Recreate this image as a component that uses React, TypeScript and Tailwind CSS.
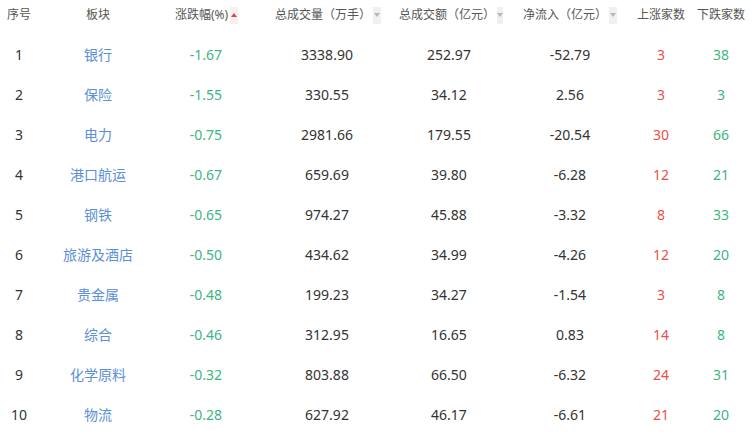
import React from "react";

interface Sector {
  id: number;
  name: string;
  change: string;
  volume: string;
  amount: string;
  netFlow: string;
  up: number;
  down: number;
}

const sectors: Sector[] = [
  { id: 1, name: "银行", change: "-1.67", volume: "3338.90", amount: "252.97", netFlow: "-52.79", up: 3, down: 38 },
  { id: 2, name: "保险", change: "-1.55", volume: "330.55", amount: "34.12", netFlow: "2.56", up: 3, down: 3 },
  { id: 3, name: "电力", change: "-0.75", volume: "2981.66", amount: "179.55", netFlow: "-20.54", up: 30, down: 66 },
  { id: 4, name: "港口航运", change: "-0.67", volume: "659.69", amount: "39.80", netFlow: "-6.28", up: 12, down: 21 },
  { id: 5, name: "钢铁", change: "-0.65", volume: "974.27", amount: "45.88", netFlow: "-3.32", up: 8, down: 33 },
  { id: 6, name: "旅游及酒店", change: "-0.50", volume: "434.62", amount: "34.99", netFlow: "-4.26", up: 12, down: 20 },
  { id: 7, name: "贵金属", change: "-0.48", volume: "199.23", amount: "34.27", netFlow: "-1.54", up: 3, down: 8 },
  { id: 8, name: "综合", change: "-0.46", volume: "312.95", amount: "16.65", netFlow: "0.83", up: 14, down: 8 },
  { id: 9, name: "化学原料", change: "-0.32", volume: "803.88", amount: "66.50", netFlow: "-6.32", up: 24, down: 31 },
  { id: 10, name: "物流", change: "-0.28", volume: "627.92", amount: "46.17", netFlow: "-6.61", up: 21, down: 20 },
];

const cols = "grid grid-cols-[38px_120px_96px_146px_98px_144px_38px_73px]";

// little sort box next to a header label
function SortIcon({ active }: { active?: boolean }) {
  return (
    <span
      className={`ml-[2px] flex h-[17px] w-[8px] items-center justify-center ${
        active ? "bg-[#f7f0f0]" : "bg-[#f0f0f2]"
      }`}
    >
      <svg width="6" height="4" viewBox="0 0 6 4">
        {active ? (
          <path d="M3 0 L6 4 L0 4 Z" fill="#e0443e" />
        ) : (
          <path d="M0 0 L6 0 L3 4 Z" fill="#b8b8bc" />
        )}
      </svg>
    </span>
  );
}

function HeadCell({ label, sort, active, className = "" }: { label: string; sort?: boolean; active?: boolean; className?: string }) {
  return (
    <div className={`flex h-[30px] items-center justify-center whitespace-nowrap ${className}`}>
      <span>{label}</span>
      {sort && <SortIcon active={active} />}
    </div>
  );
}

export default function App() {
  return (
    <div
      className="h-[434px] w-[753px] overflow-hidden bg-white"
      style={{ fontFamily: '"Noto Sans", "Noto Sans CJK SC", sans-serif' }}
    >
      {/* Header */}
      <div className={`${cols} h-[34px] text-[12px] text-[#555]`}>
        <HeadCell label="序号" />
        <HeadCell label="板块" />
        <HeadCell label="涨跌幅(%)" sort active className="pl-[1px]" />
        <HeadCell label="总成交量（万手）" sort className="pl-[2px]" />
        <HeadCell label="总成交额（亿元）" sort className="pl-[4px]" />
        <HeadCell label="净流入（亿元）" sort />
        <HeadCell label="上涨家数" />
        <HeadCell label="下跌家数" className="pl-[9px]" />
      </div>

      {/* Rows */}
      {sectors.map((s) => (
        <div key={s.id} className={`${cols} h-[40px] items-center text-[14px] text-[#333]`}>
          <div className="flex justify-center">{s.id}</div>
          <div className="flex justify-center whitespace-nowrap text-[#5b8fd6]">{s.name}</div>
          <div className="flex justify-center text-[#3db57f]">{s.change}</div>
          <div className="flex justify-center">{s.volume}</div>
          <div className="flex justify-center">{s.amount}</div>
          <div className="flex justify-center">{s.netFlow}</div>
          <div className="flex justify-center text-[#e8504a]">{s.up}</div>
          <div className="flex justify-center pl-[9px] text-[#3db57f]">{s.down}</div>
        </div>
      ))}
    </div>
  );
}
